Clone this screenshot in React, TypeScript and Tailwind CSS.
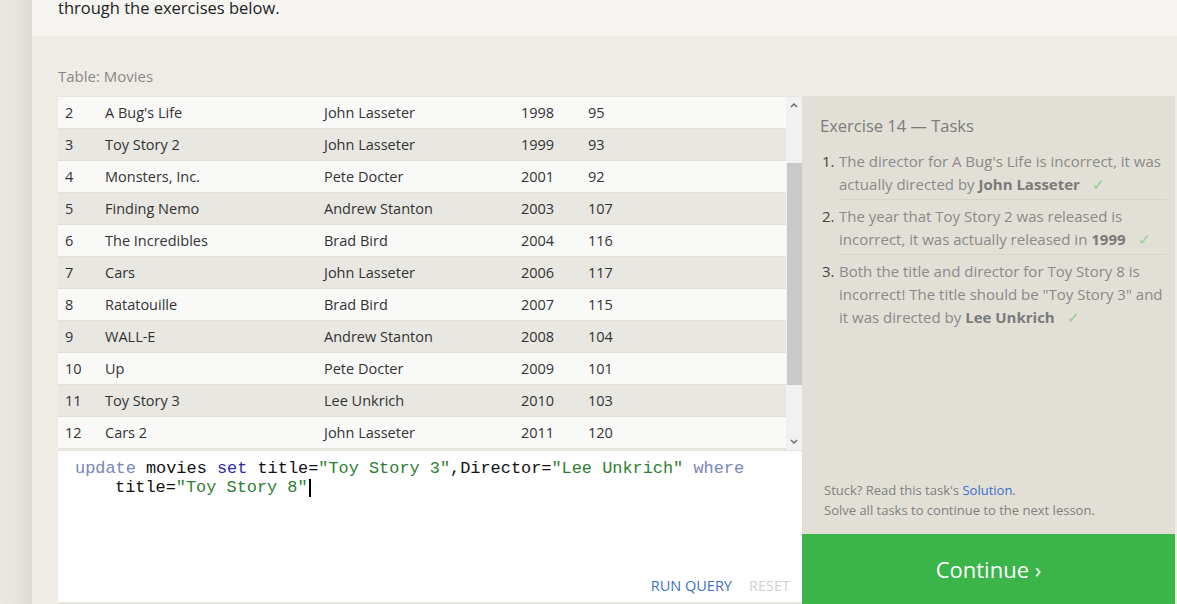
import React from 'react';

const movies = [
  [2, "A Bug's Life", 'John Lasseter', 1998, 95],
  [3, 'Toy Story 2', 'John Lasseter', 1999, 93],
  [4, 'Monsters, Inc.', 'Pete Docter', 2001, 92],
  [5, 'Finding Nemo', 'Andrew Stanton', 2003, 107],
  [6, 'The Incredibles', 'Brad Bird', 2004, 116],
  [7, 'Cars', 'John Lasseter', 2006, 117],
  [8, 'Ratatouille', 'Brad Bird', 2007, 115],
  [9, 'WALL-E', 'Andrew Stanton', 2008, 104],
  [10, 'Up', 'Pete Docter', 2009, 101],
  [11, 'Toy Story 3', 'Lee Unkrich', 2010, 103],
  [12, 'Cars 2', 'John Lasseter', 2011, 120],
];

const sans = "font-['Open_Sans','Noto_Sans',sans-serif]";

const Check = () => <span className="ml-[12px] text-[#8fcf8f]">✓</span>;

const Task: React.FC<{ n: number; last?: boolean; children: React.ReactNode }> = ({ n, last, children }) => (
  <li className="flex">
    <span className="w-[19px] shrink-0 pl-[2px] text-[#444]">{n}.</span>
    <div className={`flex-1 pb-[3px] mb-[5px] ${last ? '' : 'border-b border-[#d6d3ca]'}`}>{children}</div>
  </li>
);

export default function App() {
  return (
    <div className={`flex w-[1177px] h-[604px] overflow-hidden ${sans}`}>
      {/* left gutter */}
      <div className="w-[32px] shrink-0 bg-gradient-to-r from-[#ece9e4] via-[#e8e5e0] to-[#dcd9d4]" />

      <div className="flex-1 flex flex-col">
        <div className="h-[36px] shrink-0 bg-[#f6f5f2] pl-[26px] flex items-end pb-[17px]">
          <p className="text-[16.5px] leading-[22px] text-[#222] whitespace-nowrap">through the exercises below.</p>
        </div>

        <div className="flex-1 bg-[#efece5] pl-[26px] pt-[29px] flex flex-col">
          <div className="h-[31px] text-[15px] leading-[22px] text-[#888]">Table: Movies</div>

          <div className="flex flex-1">
            {/* table + editor */}
            <div className="w-[744px] flex flex-col">
              <div className="h-[354px] flex border-t border-[#e8e6e1]">
                <div className="flex-1 flex flex-col">
                  {movies.map((m, i) => (
                    <div
                      key={m[0]}
                      className={`h-[32px] shrink-0 flex items-center text-[14.5px] text-[#333] border-b border-[#e2e0da] ${
                        i % 2 === 0 ? 'bg-[#f9f9f8]' : 'bg-[#e9e7e1]'
                      }`}
                    >
                      <span className="w-[47px] pl-[7px]">{m[0]}</span>
                      <span className="w-[219px]">{m[1]}</span>
                      <span className="w-[197px]">{m[2]}</span>
                      <span className="w-[67px]">{m[3]}</span>
                      <span>{m[4]}</span>
                    </div>
                  ))}
                </div>
                {/* scrollbar */}
                <div className="w-[16px] bg-[#f1f1f1] flex flex-col items-center">
                  <div className="h-[17px] flex items-center justify-center">
                    <svg width="8" height="5" viewBox="0 0 8 5"><path d="M1 4 L4 1 L7 4" fill="none" stroke="#666" strokeWidth="1.4" /></svg>
                  </div>
                  <div className="mt-[49px] h-[222px] w-[15px] bg-[#c9c9c9]" />
                  <div className="flex-1" />
                  <div className="h-[17px] flex items-center justify-center">
                    <svg width="8" height="5" viewBox="0 0 8 5"><path d="M1 1 L4 4 L7 1" fill="none" stroke="#666" strokeWidth="1.4" /></svg>
                  </div>
                </div>
              </div>

              <div className="flex-1 bg-white border-t border-[#e4e2dd] border-b-2 border-b-[#e5e3de] flex flex-col pl-[17px] pt-[8px]">
                <div className="font-['Liberation_Mono','Courier_New',monospace] text-[16.9px] leading-[19px] text-[#111] whitespace-nowrap">
                  <div>
                    <span className="text-[#7a86b8]">update</span> movies <span className="text-[#2a2ab0]">set</span> title=
                    <span className="text-[#2f7d32]">"Toy Story 3"</span>,Director=<span className="text-[#2f7d32]">"Lee Unkrich"</span>{' '}
                    <span className="text-[#7a86b8]">where</span>
                  </div>
                  <div className="pl-[40px] flex items-center">
                    <span>title=<span className="text-[#2f7d32]">"Toy Story 8"</span></span>
                    <span className="inline-block w-[2px] h-[18px] bg-black ml-[1px]" />
                  </div>
                </div>
                <div className="flex-1" />
                <div className="flex justify-end gap-[17px] pr-[12px] pb-[6px] text-[14.5px] leading-[20px]">
                  <span className="text-[#3b6fc6]">RUN QUERY</span>
                  <span className="text-[#cfcfcf]">RESET</span>
                </div>
              </div>
            </div>

            {/* right panel */}
            <div className="w-[373px] flex flex-col">
              <div className="flex-1 bg-[#e2dfd6] pl-[18px] pr-[8px] pt-[19px] flex flex-col text-[#8a8a8a]">
                <h3 className="text-[16.5px] leading-[22px] text-[#7b7b7b]">Exercise 14 — Tasks</h3>
                <ol className="mt-[13px] text-[15px] leading-[23px]">
                  <Task n={1}>
                    The director for A Bug's Life is incorrect, it was actually directed by{' '}
                    <b className="text-[#7a7a7a]">John Lasseter</b>
                    <Check />
                  </Task>
                  <Task n={2}>
                    The year that Toy Story 2 was released is incorrect, it was actually released in{' '}
                    <b className="text-[#7a7a7a]">1999</b>
                    <Check />
                  </Task>
                  <Task n={3} last>
                    Both the title and director for Toy Story 8 is incorrect! The title should be "Toy Story 3" and
                    it was directed by <b className="text-[#7a7a7a]">Lee Unkrich</b>
                    <Check />
                  </Task>
                </ol>
                <div className="flex-1" />
                <div className="pl-[4px] pb-[14px] text-[13px] leading-[20px] text-[#808080]">
                  <p>
                    Stuck? Read this task's <span className="text-[#3b6fc6]">Solution</span>.
                  </p>
                  <p>Solve all tasks to continue to the next lesson.</p>
                </div>
              </div>
              <div className="h-[70px] shrink-0 bg-[#3bb44a] flex items-center justify-center text-white text-[22px]">
                Continue ›
              </div>
            </div>
          </div>
        </div>
      </div>
    </div>
  );
}
